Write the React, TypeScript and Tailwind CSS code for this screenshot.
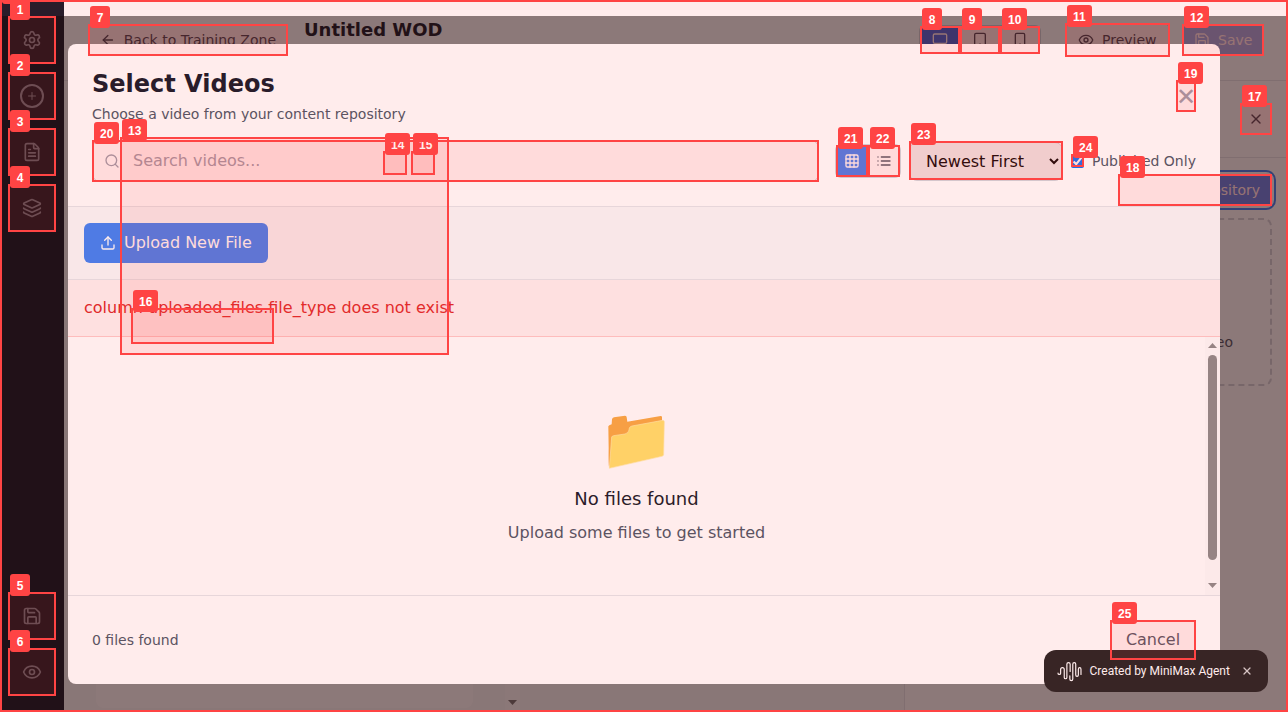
import {
  ArrowLeft, Eye, FileText, Grid3x3, Layers, Monitor, Plus, Save, Search, Settings, Smartphone, Tablet, Upload, X,
} from 'lucide-react';

type Mark = [id: number, x: number, y: number, w: number, h: number];

const marks: Mark[] = [
  [0, 0, 0, 1288, 712],
  [1, 8, 16, 48, 48],
  [2, 8, 72, 48, 48],
  [3, 8, 128, 48, 48],
  [4, 8, 184, 48, 48],
  [5, 8, 592, 48, 48],
  [6, 8, 648, 48, 48],
  [7, 88, 24, 200, 32],
  [8, 920, 26, 40, 28],
  [9, 960, 26, 40, 28],
  [10, 1000, 26, 40, 28],
  [11, 1065, 23, 105, 34],
  [12, 1182, 24, 82, 32],
  [13, 120, 137, 329, 218],
  [14, 383, 151, 24, 24],
  [15, 411, 151, 24, 24],
  [16, 131, 308, 143, 36],
  [17, 1240, 103, 32, 32],
  [18, 1118, 174, 154, 32],
  [19, 1176, 80, 20, 32],
  [20, 92, 140, 727, 42],
  [21, 836, 145, 32, 32],
  [22, 868, 145, 32, 32],
  [23, 909, 141, 154, 39],
  [24, 1071, 154, 13, 13],
  [25, 1110, 620, 86, 40],
];

function Marks() {
  return (
    <div className="pointer-events-none absolute inset-0 overflow-hidden">
      {marks.map(([id, x, y, w, h]) => (
        <div
          key={id}
          className="absolute border-2 border-[#ff4444] bg-[#ff4444]/10"
          style={{ left: x, top: y, width: w, height: h }}
        >
          <span className="absolute -top-5 left-0 flex h-[22px] min-w-5 items-center justify-center rounded-[3px] bg-[#ff4444] px-1.5 pt-0.5 font-['Liberation_Sans',sans-serif] text-[12px] leading-[14px] font-bold text-white">
            {id}
          </span>
        </div>
      ))}
    </div>
  );
}

function ListIcon() {
  return (
    <svg width="16" height="16" viewBox="0 0 24 24" fill="none" stroke="currentColor" strokeWidth="2" strokeLinecap="round">
      <path d="M3 6h.01M3 12h.01M3 18h.01M8 6h13M8 12h13M8 18h13" />
    </svg>
  );
}

function Sidebar() {
  const item = 'flex size-12 items-center justify-center text-gray-400';
  return (
    <nav className="flex w-16 shrink-0 flex-col items-center justify-between bg-[#111827] py-4">
      <div className="flex flex-col gap-2">
        <button className={item}><Settings size={20} /></button>
        <button className={item}>
          <span className="flex size-6 items-center justify-center rounded-full border-2 border-gray-400"><Plus size={12} /></span>
        </button>
        <button className={item}><FileText size={20} /></button>
        <button className={item}><Layers size={20} /></button>
      </div>
      <div className="flex flex-col gap-2">
        <button className={item}><Save size={20} /></button>
        <button className={item}><Eye size={20} /></button>
      </div>
    </nav>
  );
}

function TopBar() {
  return (
    <header className="flex h-[81px] shrink-0 items-start border-b border-gray-200 bg-white pr-6 pl-6 text-sm text-gray-700">
      <button className="mt-6 flex h-8 w-[200px] items-center gap-2 px-3 whitespace-nowrap">
        <ArrowLeft size={16} />Back to Training Zone
      </button>
      <h1 className="mt-4 ml-4 flex-1 text-lg leading-7 font-bold text-[#111827]">Untitled WOD</h1>
      <div className="mt-[25px] flex overflow-hidden rounded-md border border-gray-300">
        <button className="flex h-7 w-10 items-center justify-center bg-[#2563eb] text-white"><Monitor size={16} /></button>
        <button className="flex h-7 w-10 items-center justify-center"><Tablet size={16} /></button>
        <button className="flex h-7 w-10 items-center justify-center"><Smartphone size={16} /></button>
      </div>
      <button className="mt-[23px] ml-6 flex h-[34px] w-[105px] items-center gap-2 rounded-md border border-gray-300 px-3"><Eye size={16} />Preview</button>
      <button className="mt-6 ml-3 flex h-8 w-[82px] items-center gap-2 rounded-md bg-[#2563eb] px-3 text-white opacity-50"><Save size={16} className="shrink-0" />Save</button>
    </header>
  );
}

function Workspace() {
  return (
    <div className="flex min-h-0 flex-1">
      <div className="flex w-[456px] bg-gray-50">
        <div className="mb-1 ml-8 w-[377px] rounded-lg bg-white" />
        <div className="ml-auto flex w-[15px] items-end justify-center bg-[#fcfcfc] pb-[7px]">
          <svg width="9" height="5" viewBox="0 0 9 5" className="text-neutral-500"><path d="M0 0h9L4.500 5z" fill="currentColor" /></svg>
        </div>
      </div>
      <div className="flex-1 bg-gray-50" />
      <aside className="w-[384px] border-l border-gray-200 bg-white">
        <div className="flex h-[77px] items-center justify-end border-b border-gray-200 pr-4">
          <button className="flex size-8 items-center justify-center text-gray-700"><X size={16} /></button>
        </div>
        <div className="flex flex-col p-4">
          <button className="h-8 w-[154px] self-end rounded-md bg-[#3b82f6] px-3 text-right text-sm whitespace-nowrap text-white ring-2 ring-[#3b82f6] ring-offset-2">
            Open Repository
          </button>
          <div className="mt-3 flex h-[168px] items-end justify-end rounded-lg border-2 border-dashed border-gray-300 pr-[37px] pb-8 text-sm text-gray-600">
            Drop or select a video
          </div>
        </div>
      </aside>
    </div>
  );
}

function Folder() {
  return (
    <svg width="58" height="55" viewBox="384 106 174 165" aria-hidden="true">
      <path d="M385 140Q386 137 395 134L396 119Q397 115 402 113L435 108Q440 108 440 113L442 126L542 109Q546 109 546 113V150L400 190L388 266Q385 260 386 205Z" fill="#f6aa44" />
      <path d="M395 172Q396 169 401 168L435 163Q446 160 447 151L448 145Q450 140 456 139L548 122Q553 122 553 126L551 225Q550 229 546 230L388 266Z" fill="#ffe16b" stroke="#ffefaf" strokeWidth="2" />
    </svg>
  );
}

function Modal() {
  return (
    <div className="absolute top-11 left-[68px] flex h-[640px] w-[1152px] flex-col overflow-hidden rounded-lg bg-white">
      <div className="h-[163px] border-b border-gray-200 px-6 pt-6">
        <div className="flex items-center justify-between">
          <div>
            <h2 className="text-2xl leading-8 font-bold text-[#111827]">Select Videos</h2>
            <p className="mt-1 text-sm text-gray-600">Choose a video from your content repository</p>
          </div>
          <button className="pt-0.5 text-2xl leading-8 text-gray-400">✕</button>
        </div>
        <div className="mt-4 flex h-[42px] items-center">
          <label className="flex h-[42px] w-[727px] items-center gap-[13px] rounded-lg border border-gray-300 px-[11px] text-gray-400">
            <Search size={16} />
            <input className="flex-1 outline-none placeholder:text-gray-400" placeholder="Search videos..." />
          </label>
          <div className="ml-4 flex overflow-hidden rounded-md border border-gray-300">
            <button className="flex size-8 items-center justify-center bg-[#3b82f6] text-white"><Grid3x3 size={16} /></button>
            <button className="flex size-8 items-center justify-center text-gray-600"><ListIcon /></button>
          </div>
          <select className="ml-2 h-[39px] w-[154px] rounded-lg border border-gray-300 bg-[#efefef] px-3 text-black">
            <option>Newest First</option>
          </select>
          <label className="ml-2 flex items-center gap-2 text-sm whitespace-nowrap text-gray-600">
            <input type="checkbox" defaultChecked className="size-[13px]" />Published Only
          </label>
        </div>
      </div>
      <div className="flex h-[73px] items-center border-b border-gray-200 bg-gray-50 px-4">
        <button className="flex h-10 w-[184px] items-center gap-2 rounded-md bg-[#3b82f6] px-4 whitespace-nowrap text-white"><Upload size={16} className="shrink-0" />Upload New File</button>
      </div>
      <div className="flex h-[57px] items-center border-b border-[#fecaca] bg-[#fef2f2] px-4 text-[#dc2626]">column uploaded_files.file_type does not exist</div>
      <div className="flex h-[258px]">
        <div className="flex flex-1 flex-col items-center pt-[78px]">
          <Folder />
          <h3 className="mt-[15px] text-lg leading-7 text-[#111827]">No files found</h3>
          <p className="mt-2 leading-6 text-gray-600">Upload some files to get started</p>
        </div>
        <div className="flex w-[15px] flex-col items-center bg-[#fcfcfc] py-1.5 text-[#8b8b8b]">
          <svg width="9" height="5" viewBox="0 0 9 5"><path d="M0 5h9L4.500 0z" fill="currentColor" /></svg>
          <div className="mt-[7px] h-[205px] w-[9px] rounded-full bg-[#8b8b8b]" />
          <svg width="9" height="5" viewBox="0 0 9 5" className="mt-auto mb-px"><path d="M0 0h9L4.500 5z" fill="currentColor" /></svg>
        </div>
      </div>
      <div className="flex flex-1 items-center justify-between border-t border-gray-200 px-6 text-gray-600">
        <span className="text-sm">0 files found</span>
        <button className="h-10 w-[86px]">Cancel</button>
      </div>
    </div>
  );
}

function AgentBadge() {
  return (
    <div className="absolute top-[650px] left-[1044px] flex h-[42px] w-56 items-center rounded-xl bg-[#222222] pl-[13px] font-['Roboto',sans-serif] text-[12px] text-white">
      <svg width="25" height="21" viewBox="110 300 76 64" fill="none" stroke="currentColor" strokeWidth="3.600" strokeLinecap="round">
        <path d="M113 337q0 4 4 4q4 0 4-4V326a5.500 6 0 0 1 11 0V350a4 4 0 0 0 8 0V310a5 5 0 0 1 10 0V332" />
        <path d="M149 345V355a4.500 5 0 0 0 9 0V310a4.500 5 0 0 1 9 0V343a4 4 0 0 0 8 0V325a4 5 0 0 1 8 0V341" />
      </svg>
      <span className="ml-[7.500px] whitespace-nowrap">Created by MiniMax Agent</span>
      <X size={12} strokeWidth={2.5} className="ml-auto mr-[15px] opacity-80" />
    </div>
  );
}

export default function App() {
  return (
    <div className="relative flex h-[712px] w-[1288px] overflow-hidden bg-white font-['DejaVu_Sans',sans-serif]">
      <Sidebar />
      <main className="flex min-w-0 flex-1 flex-col">
        <TopBar />
        <Workspace />
      </main>
      <div className="absolute inset-x-0 top-4 bottom-0 bg-black/50" />
      <Modal />
      <AgentBadge />
      <Marks />
    </div>
  );
}
